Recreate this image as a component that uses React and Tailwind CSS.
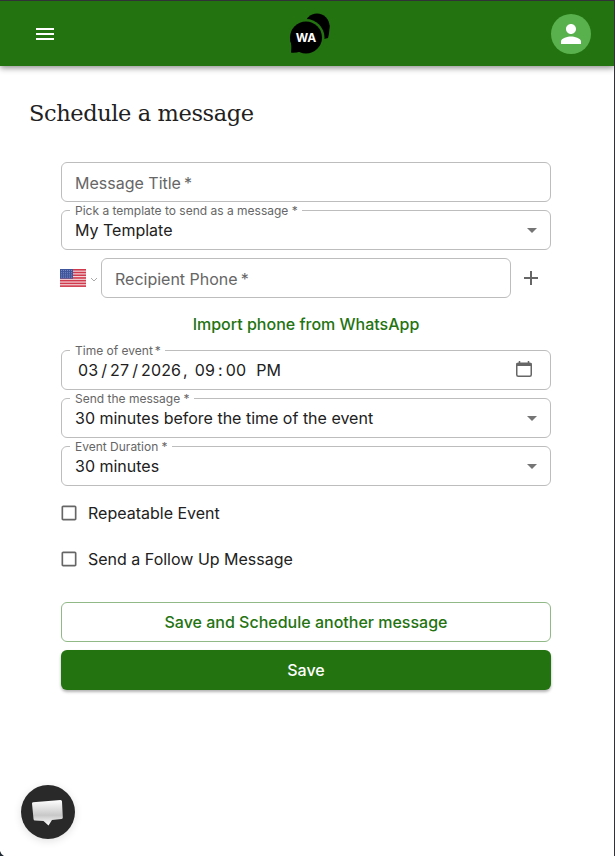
import { useState } from "react";
import { MdAdd, MdArrowDropDown, MdCheckBoxOutlineBlank, MdMenu, MdPerson } from "react-icons/md";

const Field = ({ label, value, children }) => (
  <div className="relative flex h-10 items-center justify-between rounded-md border border-[#bdbdbd] pl-[13px] pr-[6px]">
    <span className="absolute -top-[9px] left-2 whitespace-nowrap bg-white pl-[5px] pr-1 text-[12px] leading-[17px] text-[#666]">
      {label}
    </span>
    <span className="whitespace-pre">{value}</span>
    {children}
  </div>
);

const Logo = () => (
  <svg width="42" height="42" viewBox="0 0 42 42">
    <circle cx="28" cy="13" r="12.5" fill="#000" />
    <path d="M40.500 12Q40.500 20 39 25L35 26L31 20Z" fill="#000" />
    <circle cx="17" cy="24.500" r="18.500" fill="#237311" />
    <circle cx="17" cy="24.500" r="16" fill="#000" />
    <path d="M1.200 27Q3 32 2 39.500Q5 40.300 12 38.500L20 34Z" fill="#000" />
    <text x="17" y="29" textAnchor="middle" fontSize="12" fontWeight="700" fontFamily="Inter, sans-serif" fill="#fff">
      WA
    </text>
  </svg>
);

const Flag = () => (
  <svg width="26" height="18" viewBox="0 0 26 18">
    <rect width="26" height="18" fill="#f3dce0" />
    {[0, 1, 2, 3, 4, 5, 6].map((i) => (
      <rect key={i} y={i * 2.72} width="26" height="1.6" fill="#d13a4d" />
    ))}
    <rect width="13" height="9.7" fill="#3f559c" />
    {[1.5, 3.7, 5.9, 8.1].map((y) => (
      <path key={y} d={`M1 ${y}h11`} stroke="#a9b5dc" strokeWidth=".7" strokeDasharray=".8 1.2" />
    ))}
  </svg>
);

const CalendarIcon = () => (
  <svg width="24" height="24" viewBox="0 0 24 24" fill="none" stroke="#666">
    <rect x="4.75" y="5.25" width="14.5" height="13" rx="1.5" strokeWidth="1.5" />
    <path d="M4.5 6.500h15" strokeWidth="3" />
    <path d="M7.5 3v3M16.5 3v3" strokeWidth="1.5" />
  </svg>
);

const ScheduleMessage = () => {
  const [form] = useState({
    template: "My Template",
    sendAt: "30 minutes before the time of the event",
    duration: "30 minutes",
  });

  return (
    <main className="px-[29px] pt-[30px]">
      <h1 className="h-9 whitespace-nowrap font-['DejaVu_Serif',serif] text-[22.5px] leading-[35px] tracking-[-0.4px]">
        Schedule a message
      </h1>

      <form className="ml-8 mr-[34px] mt-[30px] flex flex-col gap-2">
        <div className="flex h-10 items-center rounded-md border border-[#bdbdbd] px-[13px] pt-0.5 text-[#666]">
          Message Title<span className="ml-[3px]">*</span>
        </div>
        <Field label="Pick a template to send as a message *" value={form.template}>
          <MdArrowDropDown size={24} color="#757575" />
        </Field>

        {/* Phone row */}
        <div className="-ml-px flex h-10 items-center">
          <Flag />
          <svg className="ml-1 mr-[3px] mt-1" width="8" height="6" viewBox="0 0 8 6" fill="none" stroke="#aaa">
            <path d="M1 1l3 3 3-3" />
          </svg>
          <div className="flex h-10 w-[410px] items-center rounded-md border border-[#bdbdbd] px-[13px] pt-0.5 text-[#666]">
            Recipient Phone<span className="ml-[3px]">*</span>
          </div>
          <MdAdd className="ml-2" size={24} color="#666" />
        </div>

        <button type="button" className="h-9 font-medium text-[#237311]">
          Import phone from WhatsApp
        </button>

        <Field
          label={
            <>
              Time of event<span className="ml-0.5">*</span>
            </>
          }
          value={
            <span className="flex pl-[3px] tracking-[0.12px]">
              <span>03</span>
              <span className="px-[3px]">/</span>
              <span>27</span>
              <span className="px-[3px]">/</span>
              <span>2026</span>
              <span className="ml-0.5 mr-[7px]">,</span>
              <span>09</span>
              <span className="px-[3px]">:</span>
              <span className="mr-2.5">00</span>
              <span>PM</span>
            </span>
          }
        >
          <span className="mr-2">
            <CalendarIcon />
          </span>
        </Field>
        <Field label="Send the message *" value={form.sendAt}>
          <MdArrowDropDown size={24} color="#757575" />
        </Field>
        <Field label="Event Duration *" value={form.duration}>
          <MdArrowDropDown size={24} color="#757575" />
        </Field>

        <div className="-mt-1 flex flex-col">
          {["Repeatable Event", "Send a Follow Up Message"].map((text) => (
            <div key={text} className="-ml-0.5 flex h-[46px] items-center gap-[9px]">
              <MdCheckBoxOutlineBlank size={20} color="#666" />
              <span>{text}</span>
            </div>
          ))}
        </div>

        <button type="button" className="mt-3 h-10 rounded-md border border-[#91b988] font-medium text-[#237311]">
          Save and Schedule another message
        </button>
        <button type="button" className="h-10 rounded-md bg-[#237311] font-medium text-white shadow-[0_2px_3px_rgba(0,0,0,0.3)]">
          Save
        </button>
      </form>
    </main>
  );
};

const App = () => (
  <div className="relative h-[856px] w-[615px] overflow-hidden border-r border-t border-[#303237] bg-white font-[Inter,sans-serif] text-[16px] leading-6 text-[#212121]">
    <header className="flex h-[65px] items-center justify-between bg-[#237311] pl-[33px] pr-[23px] shadow-[0_2px_6px_rgba(0,0,0,0.45)]">
      <MdMenu size={24} color="#fff" />
      <div className="ml-[12px] pt-px">
        <Logo />
      </div>
      <div className="flex h-10 w-10 items-center justify-center rounded-full bg-[#58b14c]">
        <MdPerson size={30} color="#fff" />
      </div>
    </header>

    <ScheduleMessage />

    {/* Chat launcher */}
    <div className="absolute left-[21px] top-[784px] h-[54px] w-[54px] rounded-full bg-[#292929] shadow-[0_2px_8px_rgba(0,0,0,0.12)]">
      <svg width="54" height="54" viewBox="0 0 54 54">
        <defs>
          <linearGradient id="bubble" x1="0" y1="0" x2="0" y2="1">
            <stop offset="0" stopColor="#fff" />
            <stop offset=".6" stopColor="#c8c8c8" />
            <stop offset="1" stopColor="#fff" />
          </linearGradient>
        </defs>
        <path d="M11 18.500Q10.900 17.500 12 17.200L39.500 15Q41 15 41 16.500L41.800 32.500Q42 33.800 40.500 34L31 35L27.500 40.500L22.500 36L14 35.500Q12.700 35.500 12.500 34Z" fill="url(#bubble)" />
      </svg>
    </div>

    {/* Rounded window corner */}
    <svg className="absolute bottom-0 left-0" width="4" height="5" viewBox="0 0 4 5">
      <path d="M0 0Q1 3.500 4 5H0Z" fill="#1f2933" />
    </svg>
  </div>
);

export default App;
